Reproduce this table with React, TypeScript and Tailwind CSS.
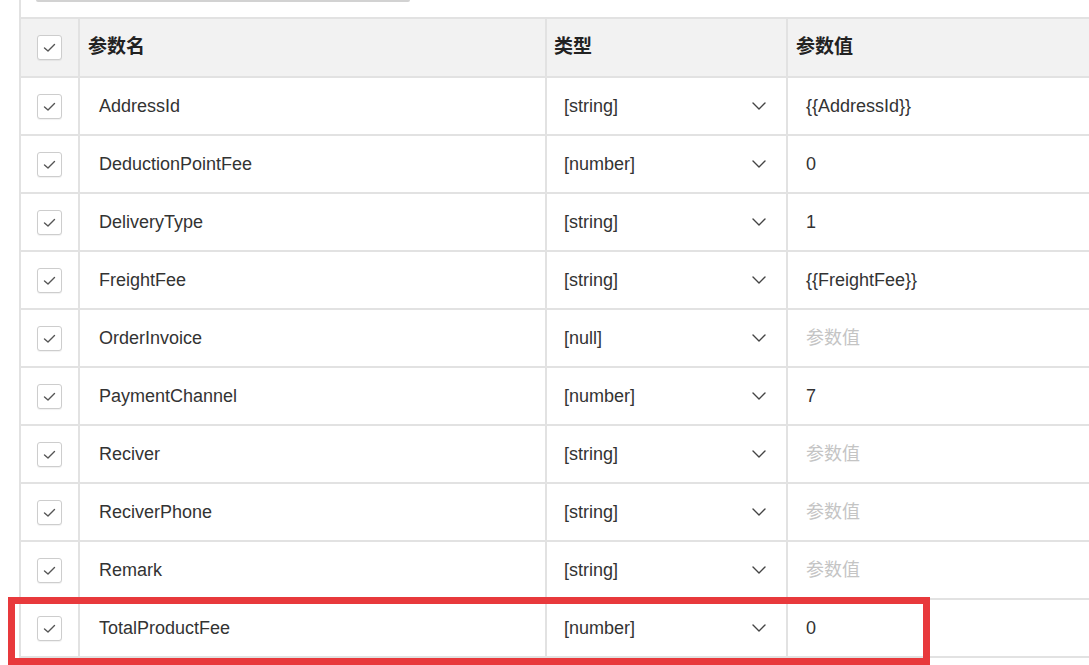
const rows = [
  { name: 'AddressId', type: '[string]', value: '{{AddressId}}' },
  { name: 'DeductionPointFee', type: '[number]', value: '0' },
  { name: 'DeliveryType', type: '[string]', value: '1' },
  { name: 'FreightFee', type: '[string]', value: '{{FreightFee}}' },
  { name: 'OrderInvoice', type: '[null]', value: '' },
  { name: 'PaymentChannel', type: '[number]', value: '7' },
  { name: 'Reciver', type: '[string]', value: '' },
  { name: 'ReciverPhone', type: '[string]', value: '' },
  { name: 'Remark', type: '[string]', value: '' },
  { name: 'TotalProductFee', type: '[number]', value: '0' },
]

function Checkbox() {
  return (
    <div className="w-[25px] h-[25px] rounded-[3px] border border-[#cdcdcd] bg-white shadow-[0_1px_1px_rgba(0,0,0,0.06)] flex items-center justify-center">
      <svg width="15" height="15" viewBox="0 0 15 15" fill="none">
        <polyline points="2.5,8 6,11 12.5,4.5" stroke="#555" strokeWidth="1.4" strokeLinecap="round" strokeLinejoin="round" />
      </svg>
    </div>
  )
}

function Chevron() {
  return (
    <svg width="14" height="8" viewBox="0 0 14 8" fill="none">
      <polyline points="1,1 7,7 13,1" stroke="#444" strokeWidth="1.4" strokeLinecap="round" strokeLinejoin="round" />
    </svg>
  )
}

export default function App() {
  return (
    <div
      className="relative w-[1089px] h-[665px] overflow-hidden bg-white text-[#333]"
      style={{ fontFamily: '"Liberation Sans", "Noto Sans CJK SC", sans-serif' }}
    >
      <div className="ml-[19px] border-l-2 border-[#e2e2e2] h-full">
        <div className="h-[17px]">
          <div className="ml-[15px] w-[374px] h-[2px] bg-[#d2d2d2] rounded-b-[2px]" />
        </div>

        <div className="grid grid-cols-[59px_467px_241px_1fr] border-t-2 border-[#e2e2e2]">
          <div className="h-[59px] bg-[#f2f2f2] border-r-2 border-b-2 border-[#e2e2e2] flex items-center justify-center">
            <Checkbox />
          </div>
          <div className="h-[59px] bg-[#f2f2f2] border-r-2 border-b-2 border-[#e2e2e2] flex items-center pl-[8px] text-[19px] font-bold text-[#222]">
            参数名
          </div>
          <div className="h-[59px] bg-[#f2f2f2] border-r-2 border-b-2 border-[#e2e2e2] flex items-center pl-[7px] text-[19px] font-bold text-[#222]">
            类型
          </div>
          <div className="h-[59px] bg-[#f2f2f2] border-b-2 border-[#e2e2e2] flex items-center pl-[8px] text-[19px] font-bold text-[#222]">
            参数值
          </div>

          {rows.map((row) => (
            <div key={row.name} className="contents">
              <div className="h-[58px] border-r-2 border-b-2 border-[#e2e2e2] flex items-center justify-center">
                <Checkbox />
              </div>
              <div className="h-[58px] border-r-2 border-b-2 border-[#e2e2e2] flex items-center pl-[19px] text-[18px]">
                {row.name}
              </div>
              <div className="h-[58px] border-r-2 border-b-2 border-[#e2e2e2] flex items-center justify-between pl-[17px] pr-[20px] text-[18px]">
                <span>{row.type}</span>
                <Chevron />
              </div>
              <div className="h-[58px] border-b-2 border-[#e2e2e2] flex items-center pl-[18px] text-[18px]">
                {row.value ? row.value : <span className="text-[#c4c4c4]">参数值</span>}
              </div>
            </div>
          ))}
        </div>
      </div>

      <div className="absolute left-[8px] top-[597px] w-[922px] h-[68px] border-[7px] border-[#e8393c]" />
    </div>
  )
}
